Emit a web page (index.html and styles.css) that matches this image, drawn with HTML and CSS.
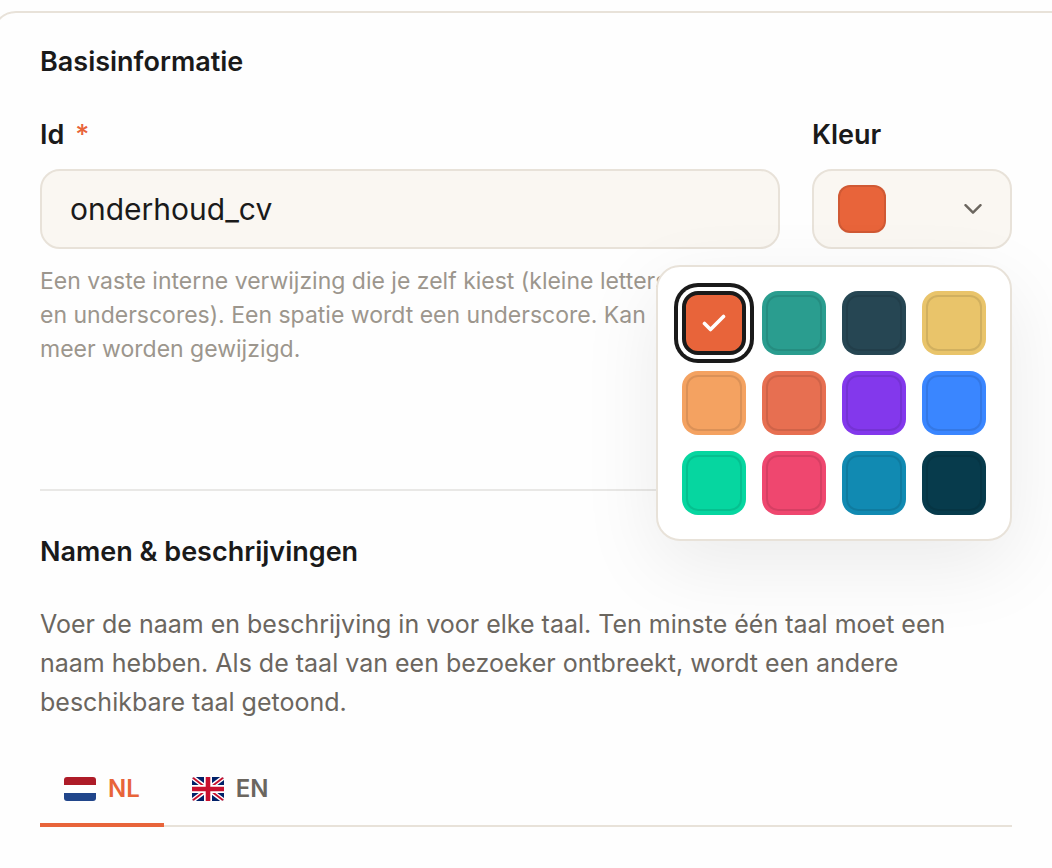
FILE: index.html
```html
<!DOCTYPE html>
<html lang="nl">
<head>
  <meta charset="UTF-8" />
  <meta name="viewport" content="width=device-width, initial-scale=1.0"/>
  <title>Basisinformatie</title>
  <link rel="stylesheet" href="styles.css">
</head>
<body>

  <form class="card">
    <section class="section">
      <h2>Basisinformatie</h2>

      <div class="fields">
        <div class="field">
          <label for="id">Id <span class="required">*</span></label>
          <input class="control" type="text" id="id" value="onderhoud_cv" aria-describedby="id-hint">
          <p class="hint" id="id-hint">Een vaste interne verwijzing die je zelf kiest (kleine letters<br>en underscores). Een spatie wordt een underscore. Kan<br>meer worden gewijzigd.</p>
        </div>

        <div class="field picker">
          <label for="color">Kleur</label>
          <button class="control picker-toggle" type="button" id="color" aria-expanded="true">
            <span class="preview"></span>
            <svg width="18" height="10" viewBox="0 0 18 10" fill="none" stroke="#6b665f" stroke-width="2.4" stroke-linecap="round" stroke-linejoin="round"><path d="M1.5 1.2L9 8.7l7.5-7.5"/></svg>
          </button>

          <div class="palette">
            <button type="button" class="swatch orange selected" aria-label="Oranje" aria-pressed="true">
              <svg width="24" height="20" viewBox="0 0 24 20" fill="none" stroke="#fff" stroke-width="3.6" stroke-linecap="round" stroke-linejoin="round"><path d="M2.5 10.5l6 6L21.5 3.5"/></svg>
            </button>
            <button type="button" class="swatch teal" aria-label="Groenblauw"></button>
            <button type="button" class="swatch slate" aria-label="Leisteen"></button>
            <button type="button" class="swatch yellow" aria-label="Geel"></button>
            <button type="button" class="swatch sand" aria-label="Zand"></button>
            <button type="button" class="swatch coral" aria-label="Koraal"></button>
            <button type="button" class="swatch purple" aria-label="Paars"></button>
            <button type="button" class="swatch blue" aria-label="Blauw"></button>
            <button type="button" class="swatch mint" aria-label="Mint"></button>
            <button type="button" class="swatch pink" aria-label="Roze"></button>
            <button type="button" class="swatch ocean" aria-label="Oceaan"></button>
            <button type="button" class="swatch night" aria-label="Nacht"></button>
          </div>
        </div>
      </div>
    </section>

    <section class="section names">
      <h2>Namen &amp; beschrijvingen</h2>
      <p class="intro">Voer de naam en beschrijving in voor elke taal. Ten minste één taal moet een<br>naam hebben. Als de taal van een bezoeker ontbreekt, wordt een andere<br>beschikbare taal getoond.</p>

      <div class="tabs" role="tablist">
        <button type="button" class="tab active" role="tab" aria-selected="true">
          <svg class="flag" viewBox="0 0 32 24">
            <rect width="32" height="24" fill="#fff"/>
            <rect width="32" height="8" fill="#ae1c28"/>
            <rect y="16" width="32" height="8" fill="#21468b"/>
          </svg>
          NL
        </button>
        <button type="button" class="tab" role="tab" aria-selected="false">
          <svg class="flag" viewBox="0 0 32 24">
            <rect width="32" height="24" fill="#012169"/>
            <path d="M0 0l32 24M32 0L0 24" stroke="#fff" stroke-width="4.6"/>
            <path d="M0 0l13 10M32 24L19 14M32 0L19 10M0 24l13-10" stroke="#c8102e" stroke-width="1.8"/>
            <path d="M16 0v24M0 12h32" stroke="#fff" stroke-width="8"/>
            <path d="M16 0v24M0 12h32" stroke="#c8102e" stroke-width="4.6"/>
          </svg>
          EN
        </button>
      </div>
    </section>
  </form>

  <script>
    const swatches = document.querySelectorAll('.swatch');
    const preview = document.querySelector('.preview');
    const check = document.querySelector('.swatch svg');

    swatches.forEach(function (swatch) {
      swatch.addEventListener('click', function () {
        swatches.forEach(s => s.classList.remove('selected'));
        swatch.classList.add('selected');
        swatch.appendChild(check);
        preview.style.backgroundColor = getComputedStyle(swatch).backgroundColor;
      });
    });
  </script>
</body>
</html>
```
FILE: styles.css
```css
* {
  box-sizing: border-box;
}

body {
  margin: 0;
  padding-top: 11px;
  background: #fefefe;
  color: #1a1a1a;
  font-family: Inter, Lato, sans-serif;
  overflow-x: hidden;
}

h2, p {
  margin: 0;
}

.card {
  margin: 0 -32px 0 -8px;
  padding: 30px 70px 30px 46px;
  min-height: 100vh;
  border: 2px solid #e8e2d9;
  border-radius: 24px;
}

h2 {
  font-size: 27px;
  font-weight: 600;
  line-height: 38px;
}

.fields {
  display: grid;
  grid-template-columns: 1fr 200px;
  gap: 32px;
  margin-top: 36px;
}

label {
  display: block;
  margin-bottom: 16px;
  font-size: 27px;
  font-weight: 600;
  line-height: 36px;
}

.required {
  margin-left: 4px;
  color: #e8643a;
  font-weight: 500;
}

.control {
  display: block;
  width: 100%;
  height: 80px;
  padding: 0 28px;
  border: 2px solid #e8e2d9;
  border-radius: 20px;
  background: #faf7f2;
  color: #1a1a1a;
  font-family: inherit;
  font-size: 30px;
}

.hint {
  margin-top: 15px;
  color: #9c968d;
  font-size: 23px;
  line-height: 34px;
  white-space: nowrap;
}

.picker {
  position: relative;
}

.picker-toggle {
  display: flex;
  align-items: center;
  justify-content: space-between;
  padding: 0 28px 0 24px;
  cursor: pointer;
}

.preview {
  width: 48px;
  height: 48px;
  border-radius: 12px;
  background: #e8643a;
  box-shadow: inset 0 0 0 2px rgba(0, 0, 0, 0.1);
}

.palette {
  position: absolute;
  top: 148px;
  right: 0;
  display: grid;
  grid-template-columns: repeat(4, 64px);
  gap: 16px;
  padding: 24px;
  border: 2px solid #e8e2d9;
  border-radius: 24px;
  background: #fff;
  box-shadow: 0 24px 80px rgba(0, 0, 0, 0.08);
}

.swatch {
  display: flex;
  align-items: center;
  justify-content: center;
  height: 64px;
  padding: 0;
  border: 4px solid transparent;
  border-radius: 16px;
  box-shadow: inset 0 0 0 2px rgba(0, 0, 0, 0.1);
  cursor: pointer;
}

.swatch.selected {
  border-color: #1a1a1a;
  box-shadow: 0 0 0 4px #fff, 0 0 0 8px #1a1a1a;
}

.orange { background: #e8643a; }
.teal { background: #2a9d8f; }
.slate { background: #264653; }
.yellow { background: #e9c46a; }
.sand { background: #f4a261; }
.coral { background: #e76f51; }
.purple { background: #8338ec; }
.blue { background: #3a86ff; }
.mint { background: #06d6a0; }
.pink { background: #ef476f; }
.ocean { background: #118ab2; }
.night { background: #073b4c; }

.names {
  margin-top: 123px;
  padding-top: 42px;
  border-top: 2px solid #e9e8e6;
}

.intro {
  margin-top: 34px;
  color: #6b665f;
  font-size: 25px;
  line-height: 39px;
}

.tabs {
  display: flex;
  gap: 4px;
  margin-top: 32px;
  box-shadow: inset 0 -2px #e8e2d9;
}

.tab {
  display: flex;
  align-items: center;
  gap: 12px;
  padding: 17px 24px 16px;
  border: none;
  border-bottom: 4px solid transparent;
  background: none;
  color: #6b665f;
  font-family: inherit;
  font-size: 24px;
  font-weight: 600;
  line-height: 36px;
  cursor: pointer;
}

.tab.active {
  border-bottom-color: #e8643a;
  color: #e8643a;
}

.flag {
  width: 32px;
  height: 24px;
  border-radius: 3px;
}
```
